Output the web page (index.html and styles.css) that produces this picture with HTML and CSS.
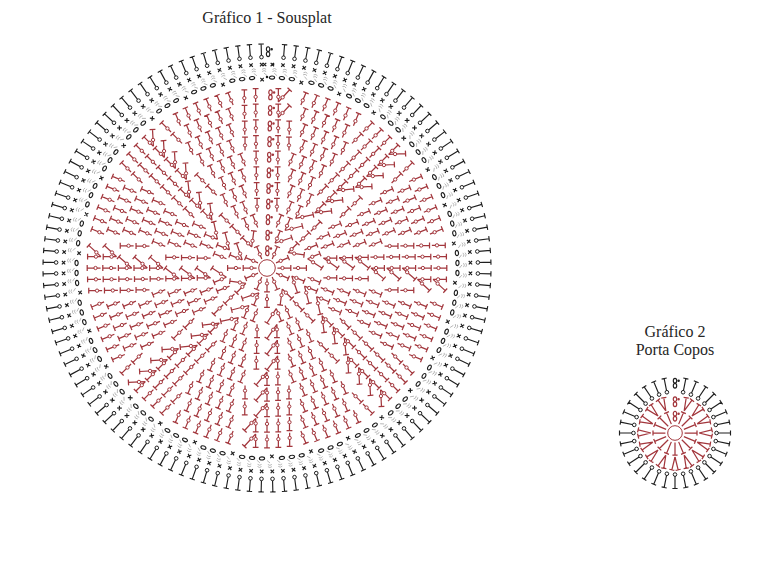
FILE: index.html
```html
<!DOCTYPE html>
<html lang="pt">
<head>
<meta charset="utf-8">
<title>Gráficos</title>
<link rel="stylesheet" href="styles.css">
</head>
<body>
<main class="page">
  <figure class="chart chart-main">
    <figcaption class="caption">Gráfico 1 - Sousplat</figcaption>
    <svg id="g1" class="diagram diagram-main" viewBox="0 0 460 460" width="460" height="460"></svg>
  </figure>
  <figure class="chart chart-small">
    <figcaption class="caption">Gráfico 2<br>Porta Copos</figcaption>
    <svg id="g2" class="diagram diagram-small" viewBox="0 0 120 120" width="120" height="120"></svg>
  </figure>
</main>
<script src="script.js"></script>
</body>
</html>
```
FILE: styles.css
```css
html, body {
  margin: 0;
  background: #fff;
}
.page {
  display: flex;
  align-items: flex-start;
  width: 768px;
  height: 562px;
  overflow: hidden;
}
.chart {
  margin: 0;
  display: flex;
  flex-direction: column;
  align-items: center;
}
.caption {
  font-family: "Liberation Serif", "Times New Roman", serif;
  font-size: 16px;
  line-height: 18px;
  color: #262626;
  text-align: center;
  white-space: nowrap;
}
.chart-main {
  width: 460px;
  margin-left: 37px;
  padding-top: 9px;
}
.chart-main .caption {
  margin-bottom: 11px;
}
.chart-small {
  width: 120px;
  margin-left: 118px;
  margin-top: 323px;
}
.chart-small .caption {
  margin-bottom: 14px;
}
.diagram {
  display: block;
}
```
FILE: script.js
```js
(function () {
  var RED = '#a3373d', BLK = '#1f1f1f', GRY = '#b0b0b0';
  var PI = Math.PI;
  function f(n) { return (Math.round(n * 100) / 100).toString(); }
  function Buf() { this.red = []; this.redC = []; this.redF = []; this.blk = []; this.blkC = []; this.blkF = []; this.gry = []; }
  function line(a, x1, y1, x2, y2) { a.push('M' + f(x1) + ' ' + f(y1) + 'L' + f(x2) + ' ' + f(y2)); }
  function circ(a, x, y, r) { a.push('M' + f(x + r) + ' ' + f(y) + 'a' + r + ' ' + r + ' 0 1 0 ' + f(-2 * r) + ' 0a' + r + ' ' + r + ' 0 1 0 ' + f(2 * r) + ' 0Z'); }
  function ell(a, x, y, rr, rt, th) {
    var ux = Math.cos(th), uy = Math.sin(th);
    var px = x + rr * ux, py = y + rr * uy, deg = f(th * 180 / PI);
    a.push('M' + f(px) + ' ' + f(py) + 'a' + rr + ' ' + rt + ' ' + deg + ' 1 0 ' + f(-2 * rr * ux) + ' ' + f(-2 * rr * uy) +
      'a' + rr + ' ' + rt + ' ' + deg + ' 1 0 ' + f(2 * rr * ux) + ' ' + f(2 * rr * uy) + 'Z');
  }
  function dc(a, ac, x0, y0, x1, y1, bw, ct, cr) {
    line(a, x0, y0, x1, y1);
    var dx = x1 - x0, dy = y1 - y0, L = Math.sqrt(dx * dx + dy * dy), ux = dx / L, uy = dy / L;
    line(a, x1 - uy * bw, y1 + ux * bw, x1 + uy * bw, y1 - ux * bw);
    if (cr) circ(ac, x0 + dx * ct, y0 + dy * ct, cr);
  }
  function cross(a, x, y, s, th) {
    var a1 = th + PI / 4, a2 = th - PI / 4;
    line(a, x - s * Math.cos(a1), y - s * Math.sin(a1), x + s * Math.cos(a1), y + s * Math.sin(a1));
    line(a, x - s * Math.cos(a2), y - s * Math.sin(a2), x + s * Math.cos(a2), y + s * Math.sin(a2));
  }
  function mk(cx, cy) { return function (r, t) { return [cx + r * Math.cos(t), cy + r * Math.sin(t)]; }; }
  function chain2(a, af, pol, r, th) {
    var p = pol(r + 2.8, th), q = pol(r + 7.8, th);
    ell(a, p[0], p[1], 2.4, 1.7, th);
    ell(a, q[0], q[1], 2.4, 1.7, th);
    var tx = -Math.sin(th), ty = Math.cos(th);
    circ(af, q[0] + tx * 3.6, q[1] + ty * 3.6, 1.25);
  }
  function render(id, b) {
    var s = document.getElementById(id), h = '';
    function p(arr, attrs) { if (arr.length) h += '<path d="' + arr.join('') + '" ' + attrs + '/>'; }
    p(b.gry, 'fill="none" stroke="' + GRY + '" stroke-width="0.9"');
    p(b.red, 'fill="none" stroke="' + RED + '" stroke-width="1.25"');
    p(b.blk, 'fill="none" stroke="' + BLK + '" stroke-width="1.15"');
    p(b.redC, 'fill="#fff" stroke="' + RED + '" stroke-width="1"');
    p(b.blkC, 'fill="#fff" stroke="' + BLK + '" stroke-width="1"');
    p(b.redF, 'fill="' + RED + '"');
    p(b.blkF, 'fill="' + BLK + '"');
    s.innerHTML = h;
  }

  /* ---------- Gráfico 1 ---------- */
  (function () {
    var b = new Buf(), cx = 230, cy = 230, pol = mk(cx, cy);
    var q = PI / 8, r0 = 10.4, rh = 15.6;
    for (var n = 0; n < 11; n++) {
      var N = 12 + 8 * n, ri = r0 + n * rh, L = rh - 2.2, step = 2 * PI / N, prev = null;
      for (var i = 0; i < N; i++) {
        var th = -PI / 2 + i * step;
        var p0 = pol(ri, th);
        if (i === 0) { chain2(b.red, b.redF, pol, ri + 1.5, th + 0.02); prev = p0; continue; }
        var phi = Math.round(th / q) * q;
        var p1 = [p0[0] + L * Math.cos(phi), p0[1] + L * Math.sin(phi)];
        var s1 = Math.floor((i - n * 1.3 + 1000 * N) * 8 / N), s0 = Math.floor((i - 1 - n * 1.3 + 1000 * N) * 8 / N);
        var inc = n > 0 && s1 !== s0 && i > 1;
        var base = inc ? prev : p0;
        dc(b.red, b.redC, base[0], base[1], p1[0], p1[1], 2.9, 0.38, 1.65);
        prev = p0;
      }
    }
    /* black rows */
    var NB = 120, sb = 2 * PI / NB;
    for (var k = 0; k < NB; k++) {
      var t = -PI / 2 + (k + 0.5) * sb;
      /* chain row */
      if (k % 4 === 3) { var c = pol(188.5, t); cross(b.blk, c[0], c[1], 2.4, t); }
      else { var e = pol(190.5, t); ell(b.blk, e[0], e[1], 1.6, 2.6, t); }
      /* sc row */
      var x = pol(203.5, t); cross(b.blk, x[0], x[1], 2.4, t);
      var u = [Math.cos(t), Math.sin(t)], tg = [-Math.sin(t), Math.cos(t)];
      for (var j = 0; j < 2; j++) {
        var cc = pol(196.5 + j * 2.2, t + sb * 0.22);
        b.gry.push('M' + f(cc[0] - 2 * tg[0]) + ' ' + f(cc[1] - 2 * tg[1]) + 'Q' + f(cc[0] + 1.8 * u[0]) + ' ' + f(cc[1] + 1.8 * u[1]) + ' ' + f(cc[0] + 2 * tg[0]) + ' ' + f(cc[1] + 2 * tg[1]));
      }
      var g1 = pol(195, t + sb * 0.2), g2 = pol(192.5, t + sb * 0.5);
      line(b.gry, g1[0], g1[1], g2[0], g2[1]);
      /* dc row */
      if (k === 0) continue;
      var d0 = pol(209.5, t), d1 = pol(224, t);
      dc(b.blk, b.blkC, d0[0], d0[1], d1[0], d1[1], 2.7, 0.1, 1.8);
    }
    /* row-start marks at the top */
    chain2(b.blk, b.blkF, pol, 211, -PI / 2 + 0.005);
    var m1 = pol(203.5, -PI / 2 - 0.012); cross(b.blk, m1[0], m1[1], 2.4, -PI / 2);
    var m2 = pol(203.5, -PI / 2 + 0.03); circ(b.blkF, m2[0], m2[1], 1.25);
    var m3 = pol(191, -PI / 2); circ(b.blkF, m3[0], m3[1], 1.25);
    circ(b.redC, cx, cy, 8.3);
    render('g1', b);
  })();

  /* ---------- Gráfico 2 ---------- */
  (function () {
    var b = new Buf(), cx = 60, cy = 60, pol = mk(cx, cy);
    var N = 16, st = 2 * PI / N;
    for (var i = 0; i < N; i++) {
      var t = -PI / 2 + i * st;
      if (i === 0) { chain2(b.red, b.redF, pol, 11.5, t); chain2(b.red, b.redF, pol, 26, t); continue; }
      var a0 = pol(9.6, t), a1 = pol(22, t);
      dc(b.red, b.redC, a0[0], a0[1], a1[0], a1[1], 2.6, 0, 0);
      var v0 = pol(24, t);
      var va = pol(37, t - 0.085), vb = pol(37, t + 0.085);
      dc(b.red, b.redC, v0[0], v0[1], va[0], va[1], 2.6, 0, 0);
      dc(b.red, b.redC, v0[0], v0[1], vb[0], vb[1], 2.6, 0, 0);
    }
    var NK = 32, sk = 2 * PI / NK;
    for (var k = 0; k < NK; k++) {
      var tt = -PI / 2 + k * sk;
      if (k === 0) { chain2(b.blk, b.blkF, pol, 44.5, tt); continue; }
      var d0 = pol(40, tt), d1 = pol(55.5, tt);
      dc(b.blk, b.blkC, d0[0], d0[1], d1[0], d1[1], 2.6, 0.1, 1.8);
    }
    circ(b.redC, cx, cy, 7.3);
    render('g2', b);
  })();
})();
```
